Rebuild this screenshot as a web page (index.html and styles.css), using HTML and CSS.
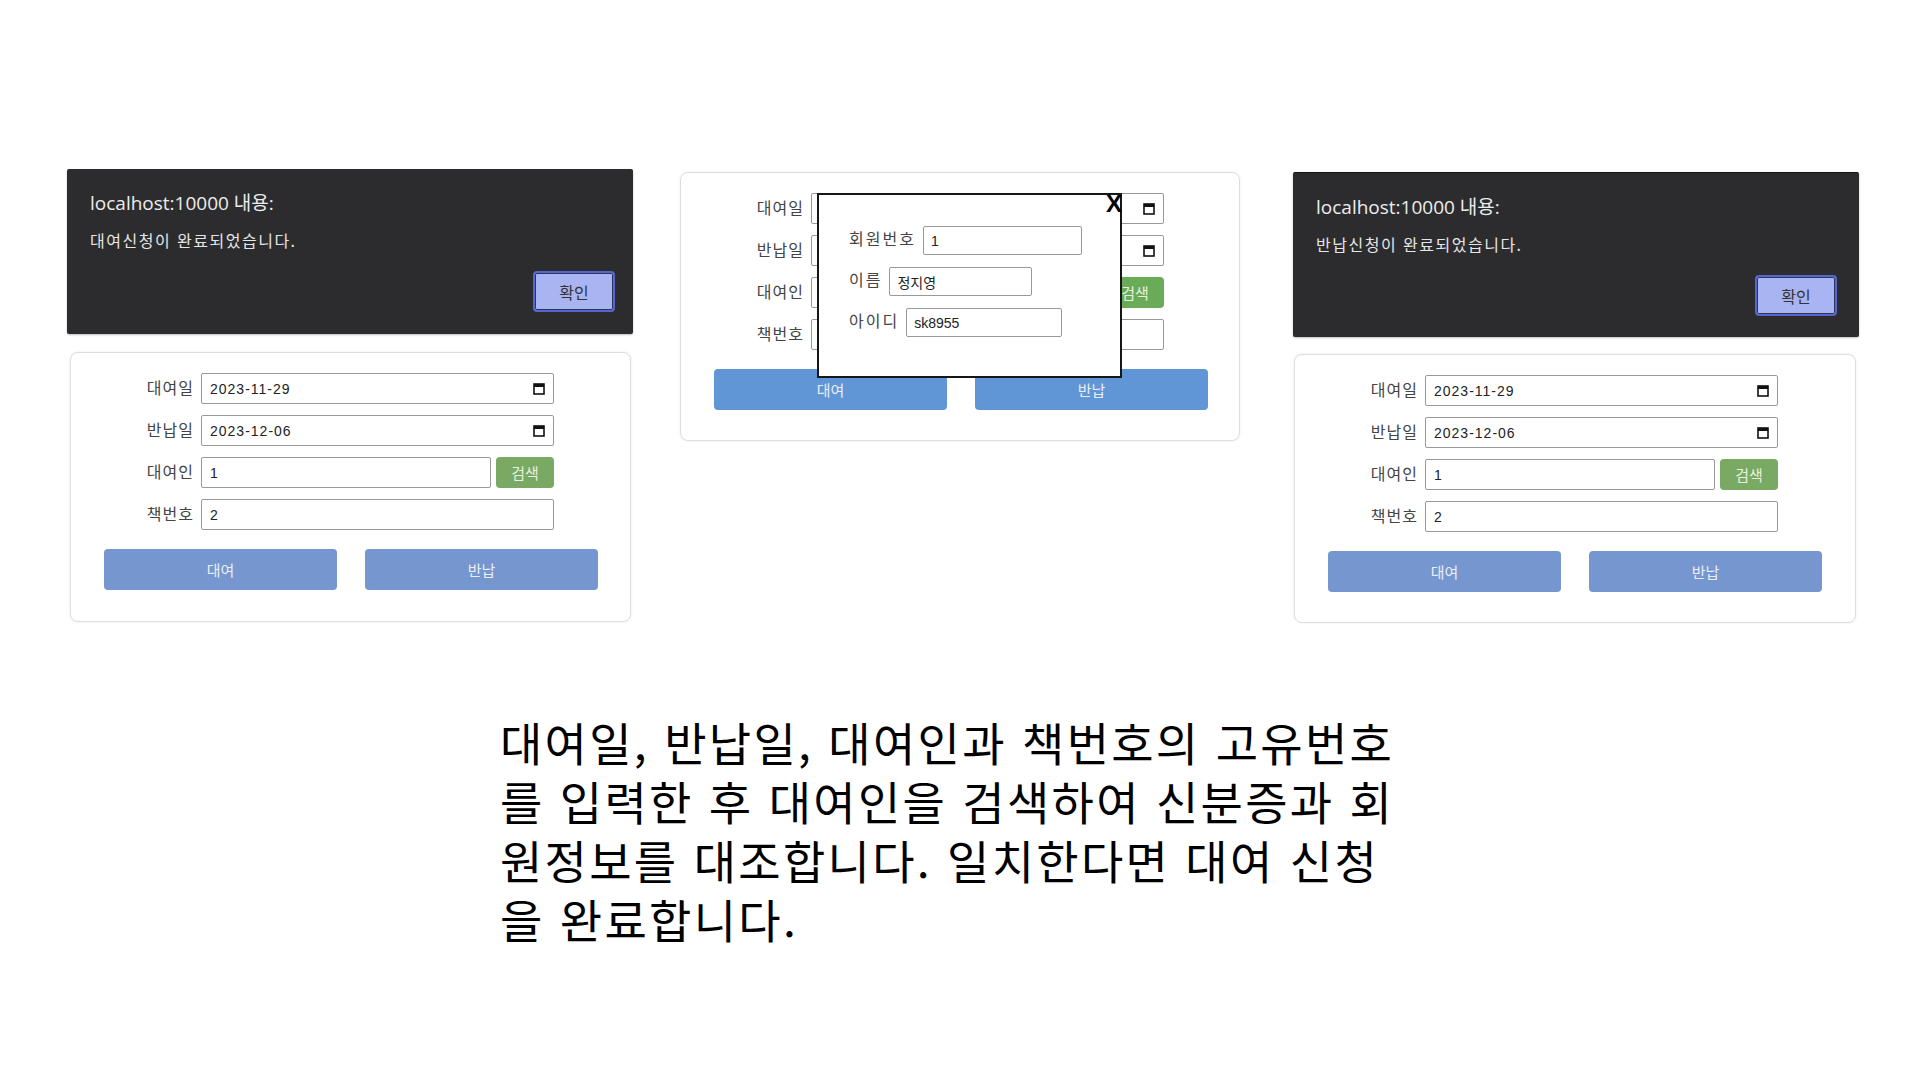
FILE: index.html
```html
<!DOCTYPE html>
<html lang="ko">
<head>
<meta charset="utf-8">
<title>대여 신청</title>
<link rel="stylesheet" href="styles.css">
</head>
<body>
<main class="slide">
  <section class="shots">
    <div class="col col-left">
      <div class="alert">
        <p class="alert-title">localhost:10000 내용:</p>
        <p class="alert-msg">대여신청이 완료되었습니다.</p>
        <button class="alert-ok">확인</button>
      </div>
      <div class="card card-left">
        <div class="row"><span class="lbl">대여일</span><div class="field date"><span>2023-11-29</span><svg class="cal" width="12" height="13" viewBox="0 0 12 13"><rect x="1" y="2" width="10" height="10" fill="none" stroke="#111" stroke-width="1.6"/><rect x="1" y="2" width="10" height="3" fill="#111"/></svg></div></div>
        <div class="row"><span class="lbl">반납일</span><div class="field date"><span>2023-12-06</span><svg class="cal" width="12" height="13" viewBox="0 0 12 13"><rect x="1" y="2" width="10" height="10" fill="none" stroke="#111" stroke-width="1.6"/><rect x="1" y="2" width="10" height="3" fill="#111"/></svg></div></div>
        <div class="row"><span class="lbl">대여인</span><div class="field short">1</div><button class="search">검색</button></div>
        <div class="row"><span class="lbl">책번호</span><div class="field">2</div></div>
        <div class="actions"><button class="act">대여</button><button class="act">반납</button></div>
      </div>
    </div>

    <div class="col col-mid">
      <div class="card card-mid">
        <div class="row"><span class="lbl">대여일</span><div class="field date"><span>2023-11-29</span><svg class="cal" width="12" height="13" viewBox="0 0 12 13"><rect x="1" y="2" width="10" height="10" fill="none" stroke="#111" stroke-width="1.6"/><rect x="1" y="2" width="10" height="3" fill="#111"/></svg></div></div>
        <div class="row"><span class="lbl">반납일</span><div class="field date"><span>2023-12-06</span><svg class="cal" width="12" height="13" viewBox="0 0 12 13"><rect x="1" y="2" width="10" height="10" fill="none" stroke="#111" stroke-width="1.6"/><rect x="1" y="2" width="10" height="3" fill="#111"/></svg></div></div>
        <div class="row"><span class="lbl">대여인</span><div class="field short">1</div><button class="search">검색</button></div>
        <div class="row"><span class="lbl">책번호</span><div class="field">2</div></div>
        <div class="actions"><button class="act">대여</button><button class="act">반납</button></div>

        <div class="popup">
          <span class="popup-close">X</span>
          <div class="prow"><span class="plbl">회원번호</span><div class="pfield w1">1</div></div>
          <div class="prow"><span class="plbl">이름</span><div class="pfield w2">정지영</div></div>
          <div class="prow"><span class="plbl">아이디</span><div class="pfield w3">sk8955</div></div>
        </div>
      </div>
    </div>

    <div class="col col-right">
      <div class="alert">
        <p class="alert-title">localhost:10000 내용:</p>
        <p class="alert-msg">반납신청이 완료되었습니다.</p>
        <button class="alert-ok">확인</button>
      </div>
      <div class="card card-right">
        <div class="row"><span class="lbl">대여일</span><div class="field date"><span>2023-11-29</span><svg class="cal" width="12" height="13" viewBox="0 0 12 13"><rect x="1" y="2" width="10" height="10" fill="none" stroke="#111" stroke-width="1.6"/><rect x="1" y="2" width="10" height="3" fill="#111"/></svg></div></div>
        <div class="row"><span class="lbl">반납일</span><div class="field date"><span>2023-12-06</span><svg class="cal" width="12" height="13" viewBox="0 0 12 13"><rect x="1" y="2" width="10" height="10" fill="none" stroke="#111" stroke-width="1.6"/><rect x="1" y="2" width="10" height="3" fill="#111"/></svg></div></div>
        <div class="row"><span class="lbl">대여인</span><div class="field short">1</div><button class="search">검색</button></div>
        <div class="row"><span class="lbl">책번호</span><div class="field">2</div></div>
        <div class="actions"><button class="act">대여</button><button class="act">반납</button></div>
      </div>
    </div>
  </section>

  <div class="caption">
    <p class="cap-line">대여일, 반납일, 대여인과 책번호의 고유번호</p>
    <p class="cap-line">를 입력한 후 대여인을 검색하여 신분증과 회</p>
    <p class="cap-line">원정보를 대조합니다. 일치한다면 대여 신청</p>
    <p class="cap-line">을 완료합니다.</p>
  </div>
</main>
</body>
</html>
```

FILE: styles.css
```css
* { box-sizing: border-box; }

html, body {
  margin: 0;
  padding: 0;
  background: #ffffff;
}

body {
  width: 1920px;
  height: 1080px;
  overflow: hidden;
  font-family: "Noto Sans CJK KR", "Noto Sans", sans-serif;
  color: #111;
}

.slide {
  width: 1920px;
  height: 1080px;
}

.shots {
  display: flex;
  align-items: flex-start;
  padding-top: 169px;
  padding-left: 67px;
}

.col { display: flex; flex-direction: column; }
.col-left { width: 566px; }
.col-mid { width: 560px; margin-left: 47px; margin-top: 3px; }
.col-right { width: 566px; margin-left: 53px; margin-top: 3px; }

/* ---------- alert dialog ---------- */
.alert {
  width: 566px;
  height: 165px;
  background: #2c2c2f;
  border-radius: 2px;
  padding: 22px 18px 0 23px;
  display: flex;
  flex-direction: column;
  box-shadow: 0 1px 2px rgba(0,0,0,0.25);
}
.col-right .alert { border-top: 1px solid #111214; padding-top: 22px; padding-right: 22px; }

.alert-title {
  margin: 0;
  font-family: "Open Sans", "Noto Sans CJK KR", sans-serif;
  font-size: 19px;
  line-height: 25px;
  color: #ececec;
}
.alert-msg {
  margin: 14px 0 0;
  font-size: 16px;
  line-height: 20px;
  letter-spacing: 1.5px;
  color: #e6e6e6;
}
.alert-ok {
  align-self: flex-end;
  margin-top: 21px;
  width: 82px;
  height: 41px;
  background: #a9b4f2;
  border: 2px solid #5566cc;
  border-radius: 4px;
  box-shadow: inset 0 0 0 1px #2f3555;
  font-family: "Noto Sans CJK KR", sans-serif;
  font-size: 16px;
  color: #333;
  padding: 0;
}

/* ---------- form card ---------- */
.card {
  position: relative;
  background: #fff;
  border: 1px solid #dedede;
  border-radius: 8px;
  box-shadow: 0 0 3px rgba(0,0,0,0.08);
  padding: 20px 0 0 32px;
  height: 270px;
}
.card-left { width: 561px; margin: 18px 0 0 3px; }
.card-mid { width: 560px; height: 269px; }
.card-right { width: 562px; height: 269px; margin: 17px 0 0 1px; }

.row {
  display: flex;
  align-items: center;
  height: 31px;
  margin-bottom: 11px;
}
.lbl {
  width: 91px;
  margin-right: 7px;
  text-align: right;
  font-size: 16px;
  letter-spacing: 1px;
  color: #444;
  line-height: 20px;
  padding-bottom: 3px;
}
.field {
  width: 353px;
  height: 31px;
  border: 1px solid #999;
  border-radius: 2px;
  background: #fff;
  padding: 0 8px;
  display: flex;
  align-items: center;
  font-family: "Liberation Sans", "Noto Sans CJK KR", sans-serif;
  font-size: 14px;
  color: #222;
}
.field.date span { letter-spacing: 1px; }
.field.date .cal { margin-left: auto; }
.field.short { width: 290px; }

.search {
  width: 58px;
  height: 31px;
  margin-left: 5px;
  border: none;
  border-radius: 4px;
  background: #79a962;
  color: #e6f1e0;
  font-family: "Noto Sans CJK KR", sans-serif;
  font-size: 15px;
  padding: 0;
}

.actions {
  display: flex;
  gap: 28px;
  margin-top: 19px;
  margin-left: 1px;
}
.act {
  width: 233px;
  height: 41px;
  border: none;
  border-radius: 4px;
  background: #7596cf;
  color: #e9eef8;
  font-family: "Noto Sans CJK KR", sans-serif;
  font-size: 15px;
  padding: 0;
}

.card-mid .act { background: #6196d6; }
.card-mid .search { background: #69ab56; }

/* ---------- popup (member lookup) ---------- */
.popup {
  position: absolute;
  left: 136px;
  top: 20px;
  width: 305px;
  height: 185px;
  background: #fff;
  border: 2px solid #161616;
  padding: 31px 0 0 30px;
}
.popup-close {
  position: absolute;
  top: -3px;
  right: -2px;
  font-family: "Liberation Sans", sans-serif;
  font-weight: bold;
  font-size: 24px;
  line-height: 24px;
  color: #000;
}
.prow {
  display: flex;
  align-items: center;
  height: 29px;
  margin-bottom: 12px;
}
.plbl {
  margin-right: 7px;
  font-size: 16px;
  letter-spacing: 2px;
  line-height: 20px;
  color: #444;
  padding-bottom: 5px;
}
.pfield {
  height: 29px;
  border: 1px solid #999;
  border-radius: 2px;
  padding: 0 7px;
  display: flex;
  align-items: center;
  font-family: "Liberation Sans", "Noto Sans CJK KR", sans-serif;
  font-size: 14px;
  color: #222;
}
.pfield.w1 { width: 159px; }
.pfield.w2 { width: 143px; }
.pfield.w3 { width: 156px; }

/* ---------- caption ---------- */
.caption {
  margin: 89px 0 0 500px;
  font-family: "Noto Sans CJK KR", sans-serif;
  font-size: 46px;
  letter-spacing: 2.3px;
  color: #000;
  white-space: nowrap;
}
.cap-line {
  margin: 0;
  height: 59px;
  line-height: 59px;
}
```
